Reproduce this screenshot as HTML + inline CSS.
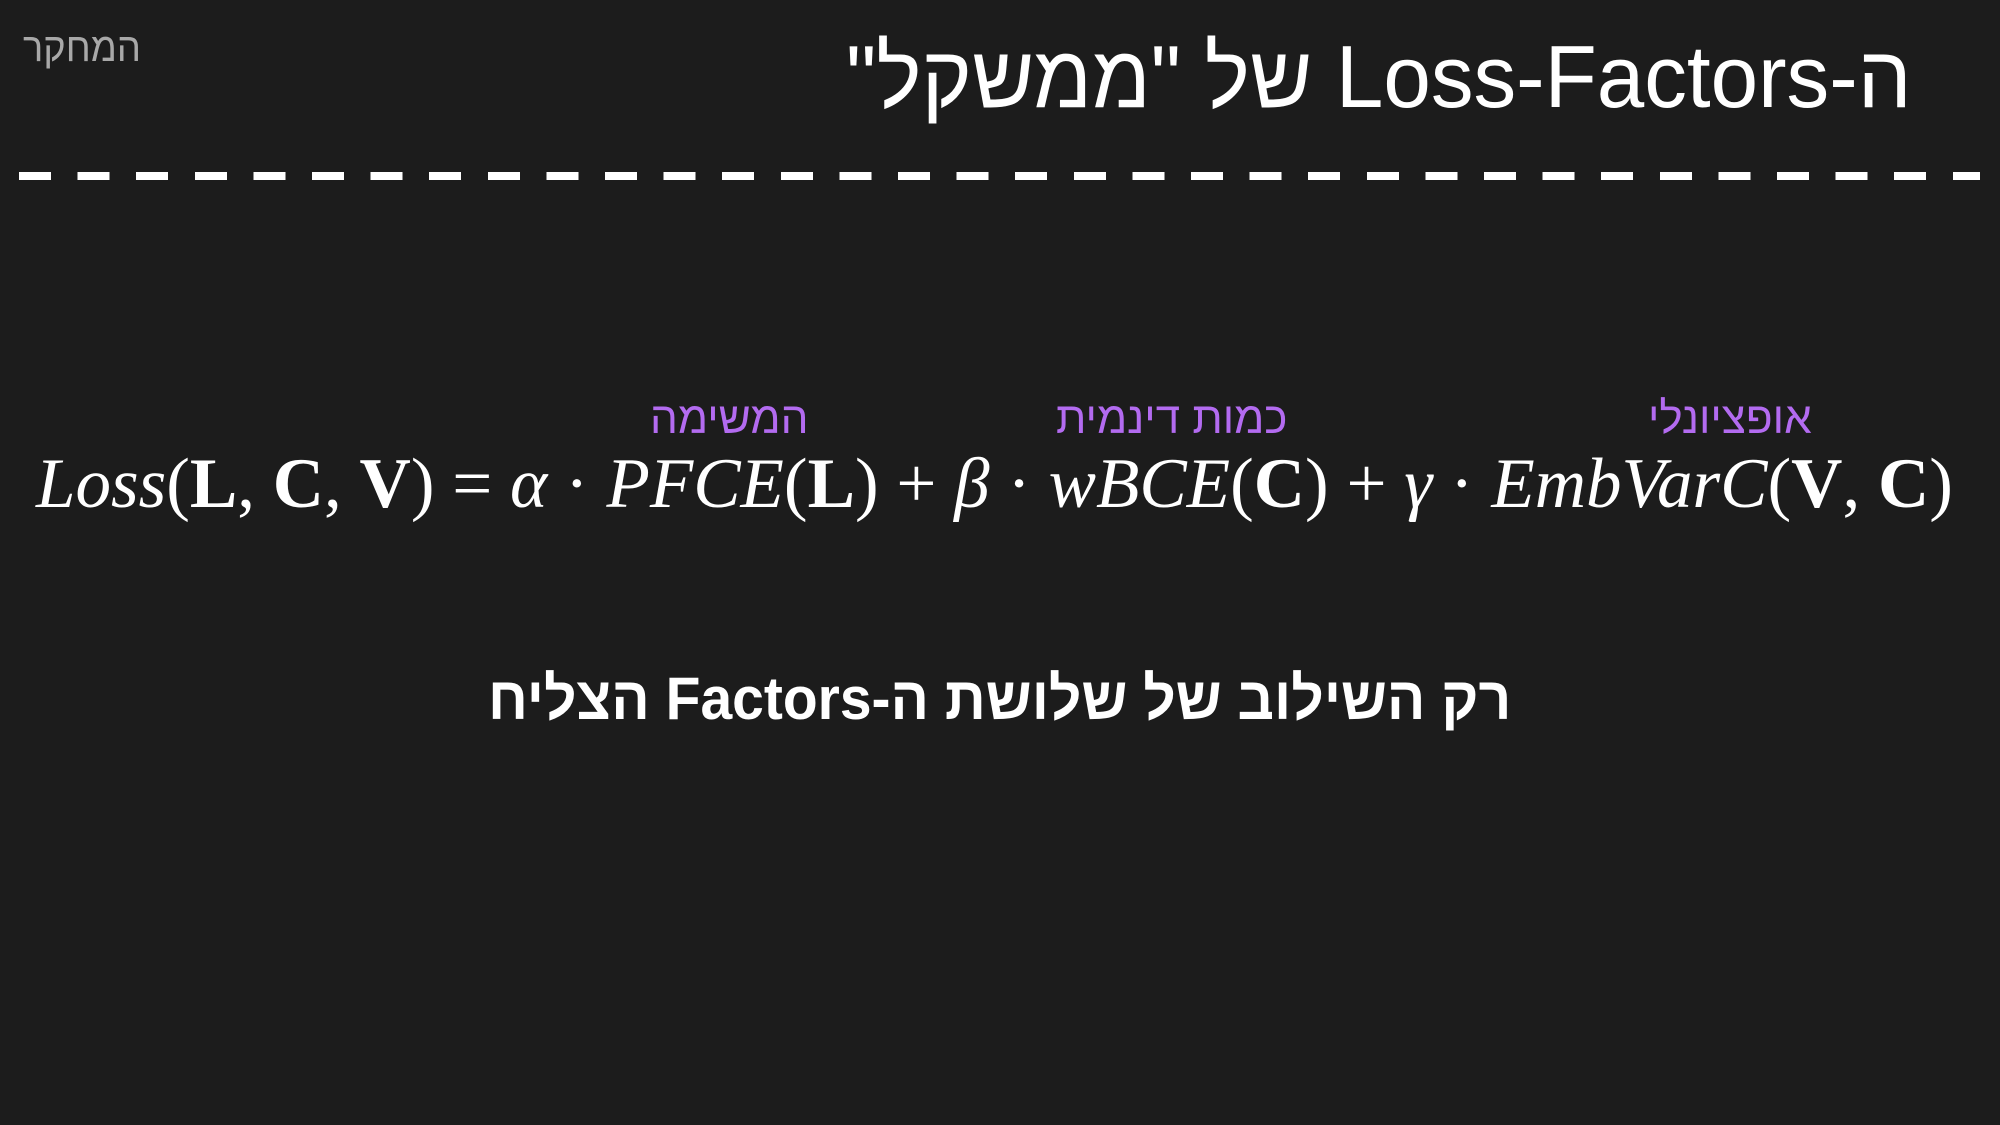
<!DOCTYPE html>
<html><head><meta charset="utf-8"><style>
html,body{margin:0;padding:0;background:#1c1c1c;width:2000px;height:1125px;overflow:hidden;}
.a{position:absolute;white-space:nowrap;}
.he{font-family:"Liberation Sans","Noto Sans CJK SC",sans-serif;}
#lab{left:23px;top:26px;font-size:40px;color:#a8a8a8;direction:rtl;transform:scaleX(0.95);transform-origin:left top;}
#title{right:88px;top:26px;font-size:88px;color:#fff;direction:rtl;transform:scaleX(0.97);transform-origin:right top;font-weight:300;}
#dash{left:19px;top:172px;width:1961px;height:8px;background:repeating-linear-gradient(90deg,#fff 0 32px,transparent 32px 58.6px);}
.p{color:#b36bf0;font-size:44px;direction:rtl;top:394px;}
#eq{left:36px;top:444px;font-family:"Liberation Serif",serif;font-size:71px;color:#fff;transform:scaleX(1.0);transform-origin:left top;}
#eq i{font-style:italic;}
#eq b{font-weight:bold;font-style:normal;}
#bot{left:488px;top:664px;font-size:60px;font-weight:bold;color:#fff;direction:rtl;transform:scaleX(0.95);transform-origin:left top;}
</style></head><body>
<div id="lab" class="a he">המחקר</div>
<div id="title" class="a he">ה-Loss-Factors של "ממשקל"</div>
<div id="dash" class="a"></div>
<div class="a he p" style="left:650px;">המשימה</div>
<div class="a he p" style="left:1056px;">כמות דינמית</div>
<div class="a he p" style="left:1648px;">אופציונלי</div>
<div id="eq" class="a"><i>Loss</i>(<b>L</b>, <b>C</b>, <b>V</b>) = <i>α</i> · <i>PFCE</i>(<b>L</b>) + <i>β</i> · <i>wBCE</i>(<b>C</b>) + <i>γ</i> · <i>EmbVarC</i>(<b>V</b>, <b>C</b>)</div>
<div id="bot" class="a he">רק השילוב של שלושת ה-Factors הצליח</div>
</body></html>
